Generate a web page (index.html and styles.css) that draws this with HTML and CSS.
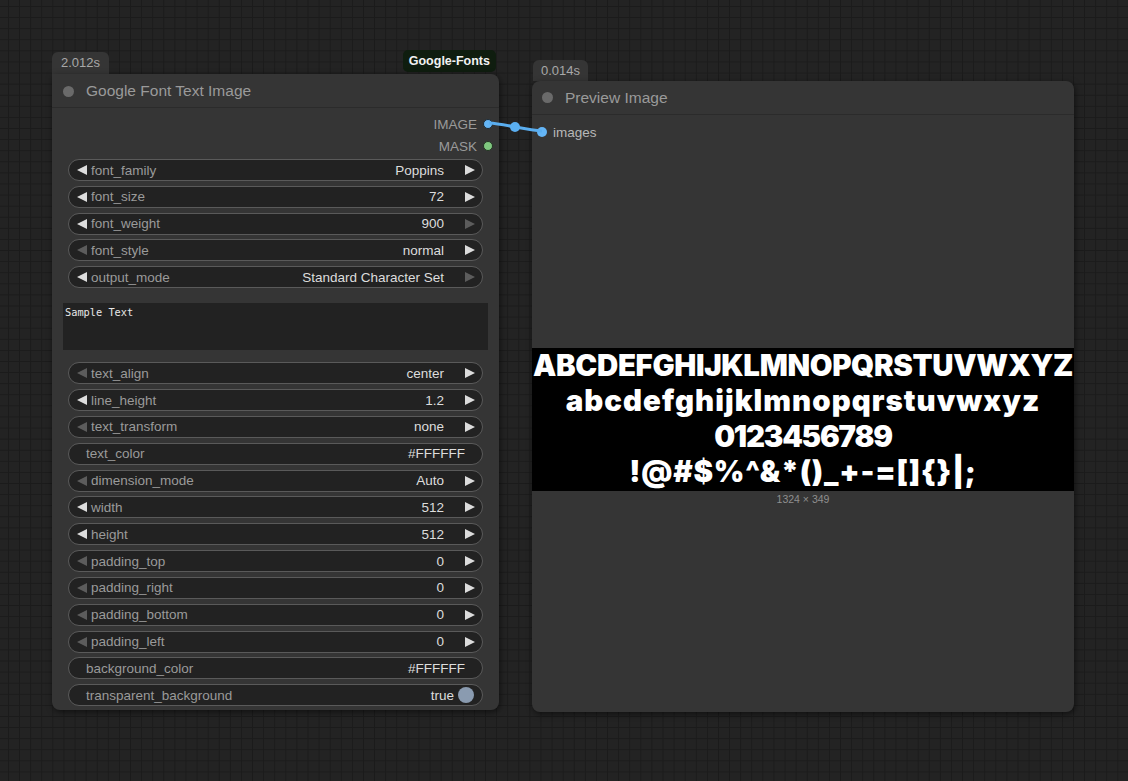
FILE: index.html
```html
<!DOCTYPE html>
<html>
<head>
<meta charset="utf-8">
<link rel="stylesheet" href="styles.css">
</head>
<body>
<div class="canvas">

  <div class="node-wrap node-left">
    <div class="badges">
      <div class="time-badge">2.012s</div>
      <div class="source-badge">Google-Fonts</div>
    </div>
    <div class="node">
      <div class="node-title"><span class="title-dot"></span><span class="title-text">Google Font Text Image</span></div>
      <div class="node-body">
        <div class="outputs">
          <div class="slot-out"><span>IMAGE</span><span class="dot dot-blue"></span></div>
          <div class="slot-out"><span>MASK</span><span class="dot dot-green"></span></div>
        </div>
        <div class="widgets first-group">
          <div class="widget"><svg class="arr" viewBox="0 0 10 10"><polygon points="10,0 0,5 10,10"/></svg><span class="lbl">font_family</span><span class="val">Poppins</span><svg class="arr" viewBox="0 0 10 10"><polygon points="0,0 10,5 0,10"/></svg></div>
          <div class="widget"><svg class="arr" viewBox="0 0 10 10"><polygon points="10,0 0,5 10,10"/></svg><span class="lbl">font_size</span><span class="val">72</span><svg class="arr" viewBox="0 0 10 10"><polygon points="0,0 10,5 0,10"/></svg></div>
          <div class="widget"><svg class="arr" viewBox="0 0 10 10"><polygon points="10,0 0,5 10,10"/></svg><span class="lbl">font_weight</span><span class="val">900</span><svg class="arr off" viewBox="0 0 10 10"><polygon points="0,0 10,5 0,10"/></svg></div>
          <div class="widget"><svg class="arr off" viewBox="0 0 10 10"><polygon points="10,0 0,5 10,10"/></svg><span class="lbl">font_style</span><span class="val">normal</span><svg class="arr" viewBox="0 0 10 10"><polygon points="0,0 10,5 0,10"/></svg></div>
          <div class="widget"><svg class="arr" viewBox="0 0 10 10"><polygon points="10,0 0,5 10,10"/></svg><span class="lbl">output_mode</span><span class="val">Standard Character Set</span><svg class="arr off" viewBox="0 0 10 10"><polygon points="0,0 10,5 0,10"/></svg></div>
        </div>
        <div class="textarea">Sample Text</div>
        <div class="widgets">
          <div class="widget"><svg class="arr off" viewBox="0 0 10 10"><polygon points="10,0 0,5 10,10"/></svg><span class="lbl">text_align</span><span class="val">center</span><svg class="arr" viewBox="0 0 10 10"><polygon points="0,0 10,5 0,10"/></svg></div>
          <div class="widget"><svg class="arr" viewBox="0 0 10 10"><polygon points="10,0 0,5 10,10"/></svg><span class="lbl">line_height</span><span class="val">1.2</span><svg class="arr" viewBox="0 0 10 10"><polygon points="0,0 10,5 0,10"/></svg></div>
          <div class="widget"><svg class="arr off" viewBox="0 0 10 10"><polygon points="10,0 0,5 10,10"/></svg><span class="lbl">text_transform</span><span class="val">none</span><svg class="arr" viewBox="0 0 10 10"><polygon points="0,0 10,5 0,10"/></svg></div>
          <div class="widget plain"><span class="lbl">text_color</span><span class="val">#FFFFFF</span></div>
          <div class="widget"><svg class="arr off" viewBox="0 0 10 10"><polygon points="10,0 0,5 10,10"/></svg><span class="lbl">dimension_mode</span><span class="val">Auto</span><svg class="arr" viewBox="0 0 10 10"><polygon points="0,0 10,5 0,10"/></svg></div>
          <div class="widget"><svg class="arr" viewBox="0 0 10 10"><polygon points="10,0 0,5 10,10"/></svg><span class="lbl">width</span><span class="val">512</span><svg class="arr" viewBox="0 0 10 10"><polygon points="0,0 10,5 0,10"/></svg></div>
          <div class="widget"><svg class="arr" viewBox="0 0 10 10"><polygon points="10,0 0,5 10,10"/></svg><span class="lbl">height</span><span class="val">512</span><svg class="arr" viewBox="0 0 10 10"><polygon points="0,0 10,5 0,10"/></svg></div>
          <div class="widget"><svg class="arr off" viewBox="0 0 10 10"><polygon points="10,0 0,5 10,10"/></svg><span class="lbl">padding_top</span><span class="val">0</span><svg class="arr" viewBox="0 0 10 10"><polygon points="0,0 10,5 0,10"/></svg></div>
          <div class="widget"><svg class="arr off" viewBox="0 0 10 10"><polygon points="10,0 0,5 10,10"/></svg><span class="lbl">padding_right</span><span class="val">0</span><svg class="arr" viewBox="0 0 10 10"><polygon points="0,0 10,5 0,10"/></svg></div>
          <div class="widget"><svg class="arr off" viewBox="0 0 10 10"><polygon points="10,0 0,5 10,10"/></svg><span class="lbl">padding_bottom</span><span class="val">0</span><svg class="arr" viewBox="0 0 10 10"><polygon points="0,0 10,5 0,10"/></svg></div>
          <div class="widget"><svg class="arr off" viewBox="0 0 10 10"><polygon points="10,0 0,5 10,10"/></svg><span class="lbl">padding_left</span><span class="val">0</span><svg class="arr" viewBox="0 0 10 10"><polygon points="0,0 10,5 0,10"/></svg></div>
          <div class="widget plain"><span class="lbl">background_color</span><span class="val">#FFFFFF</span></div>
          <div class="widget toggle"><span class="lbl">transparent_background</span><span class="val">true</span><span class="knob"></span></div>
        </div>
      </div>
    </div>
  </div>

  <div class="node-wrap node-right">
    <div class="badges">
      <div class="time-badge">0.014s</div>
    </div>
    <div class="node node-preview">
      <div class="node-title"><span class="title-dot"></span><span class="title-text">Preview Image</span></div>
      <div class="node-body">
        <div class="slot-in"><span class="dot dot-blue"></span><span>images</span></div>
        <div class="preview">
          <div class="image">
            <div class="line l-upper">ABCDEFGHIJKLMNOPQRSTUVWXYZ</div>
            <div class="line l-lower">abcdefghijklmnopqrstuvwxyz</div>
            <div class="line l-digits">0123456789</div>
            <div class="line l-symbols">!@#$%^&amp;*()_+-=[]{}|;</div>
          </div>
          <div class="caption">1324 × 349</div>
        </div>
      </div>
    </div>
  </div>

  <svg class="link" width="1128" height="781" viewBox="0 0 1128 781">
    <path d="M489 123 C 505 124, 526 130, 542 131" fill="none" stroke="#5aaef0" stroke-width="3"/>
    <circle cx="515" cy="127" r="5" fill="#5aaef0"/>
  </svg>
</div>
</body>
</html>
```
FILE: styles.css
```css
* { box-sizing: border-box; }
html, body { margin: 0; padding: 0; }
body {
  width: 1128px;
  height: 781px;
  overflow: hidden;
  font-family: "Liberation Sans", Arial, sans-serif;
}
.canvas {
  position: relative;
  width: 1128px;
  height: 781px;
  background-color: #232323;
  background-image:
    linear-gradient(to right, #1b1b1b 1px, transparent 1px),
    linear-gradient(to bottom, #1b1b1b 1px, transparent 1px);
  background-size: 11.1px 11.1px;
  background-position: 8px 6px;
}
.node-wrap {
  position: absolute;
  display: flex;
  flex-direction: column;
}
.node-left { left: 52px; top: 50px; width: 447px; }
.node-right { left: 532px; top: 60px; width: 542px; }

.badges {
  display: flex;
  justify-content: space-between;
  align-items: flex-end;
  height: 24px;
}
.node-right .badges { height: 21px; }
.time-badge {
  height: 22px;
  padding: 0 9px 0 9px;
  background: #353535;
  color: #a8a8a8;
  font-size: 13px;
  line-height: 22px;
  border-radius: 6px 6px 0 0;
}
.node-right .time-badge { height: 21px; line-height: 21px; padding: 0 8px 0 8px; margin-left: 1px; }
.source-badge {
  align-self: flex-start;
  height: 22px;
  margin-right: 3px;
  padding: 0 6px;
  background: #0f1d0f;
  color: #f2f2f2;
  font-weight: bold;
  font-size: 12.5px;
  line-height: 22px;
  border-radius: 5px;
}

.node {
  background: #353535;
  border-radius: 8px;
  box-shadow: 1px 2px 6px rgba(0,0,0,0.55);
  display: flex;
  flex-direction: column;
}
.node-left .node { height: 636px; border-top-left-radius: 0; }
.node-preview { height: 631px; }

.node-title {
  height: 34px;
  display: flex;
  align-items: center;
  border-bottom: 1px solid #2b2b2b;
  padding-left: 11px;
  padding-top: 1px;
}
.title-dot {
  width: 11px;
  height: 11px;
  border-radius: 50%;
  background: #6a6a6a;
}
.title-text {
  margin-left: 12px;
  color: #9a9a9a;
  font-size: 15.5px;
}
.node-preview .node-title { padding-left: 10px; padding-top: 0; }
.node-preview .title-text { margin-left: 12px; }

.node-body {
  display: flex;
  flex-direction: column;
  padding-top: 5px;
}
.outputs { display: flex; flex-direction: column; }
.slot-out {
  height: 22px;
  display: flex;
  align-items: center;
  justify-content: flex-end;
  padding-right: 6px;
  color: #9a9a9a;
  font-size: 13.5px;
}
.dot {
  width: 10px;
  height: 10px;
  border-radius: 50%;
  border: 1px solid #1e2a33;
}
.slot-out .dot { margin-left: 6px; }
.dot-blue { background: #64b5f6; }
.dot-green { background: #7fc77f; border-color: #223322; }

.widgets {
  display: flex;
  flex-direction: column;
  gap: 4.83px;
  padding: 0 16px;
}
.first-group { margin-top: 2px; }
.widget {
  height: 22px;
  display: flex;
  align-items: center;
  padding: 0 7px 0 8px;
  background: #222;
  border: 1px solid #5a5a5a;
  border-radius: 11px;
  font-size: 13.5px;
}
.arr {
  width: 10px;
  height: 10px;
  flex: none;
  fill: #dcdcdc;
}
.arr.off { fill: #5c5c5c; }
.lbl {
  color: #9a9a9a;
  margin-left: 4px;
  flex: 1;
  white-space: nowrap;
}
.val {
  color: #dddddd;
  margin-right: 21px;
  white-space: nowrap;
}
.widget.plain { padding: 0 17px 0 17px; }
.widget.plain .lbl { margin-left: 0; }
.widget.plain .val { margin-right: 0; }
.widget.toggle { padding: 0 8px 0 17px; }
.widget.toggle .lbl { margin-left: 0; }
.widget.toggle .val { margin-right: 4px; }
.knob {
  width: 16px;
  height: 16px;
  border-radius: 50%;
  background: #8a9bb0;
}

.textarea {
  margin: 15px 11px 12px 11px;
  height: 47px;
  background: #222;
  color: #e8e8e8;
  font-family: "DejaVu Sans Mono", "Liberation Mono", monospace;
  font-size: 10.3px;
  padding: 3px 2px;
}

.slot-in {
  height: 22px;
  margin-top: 1px;
  display: flex;
  align-items: center;
  padding-left: 5px;
  color: #b8b8b8;
  font-size: 13.5px;
}
.slot-in .dot { margin-right: 6px; border: none; }

.preview {
  margin-top: 205px;
  display: flex;
  flex-direction: column;
  align-items: center;
}
.image {
  width: 100%;
  height: 143px;
  background: #000;
  display: flex;
  flex-direction: column;
  align-items: center;
  color: #fff;
  font-family: Inter, "Noto Sans", sans-serif;
  font-weight: 900;
  font-size: 29.4px;
  line-height: 35.3px;
  overflow: hidden;
}
.line { white-space: nowrap; }
.l-upper { letter-spacing: -0.33px; }
.l-lower { letter-spacing: 1.05px; }
.l-digits { letter-spacing: -1.2px; }
.l-symbols { letter-spacing: 0.8px; }
.caption {
  margin-top: 1px;
  color: #8f8f8f;
  font-size: 10.5px;
  line-height: 14px;
}

.link {
  position: absolute;
  left: 0;
  top: 0;
  pointer-events: none;
}
```
